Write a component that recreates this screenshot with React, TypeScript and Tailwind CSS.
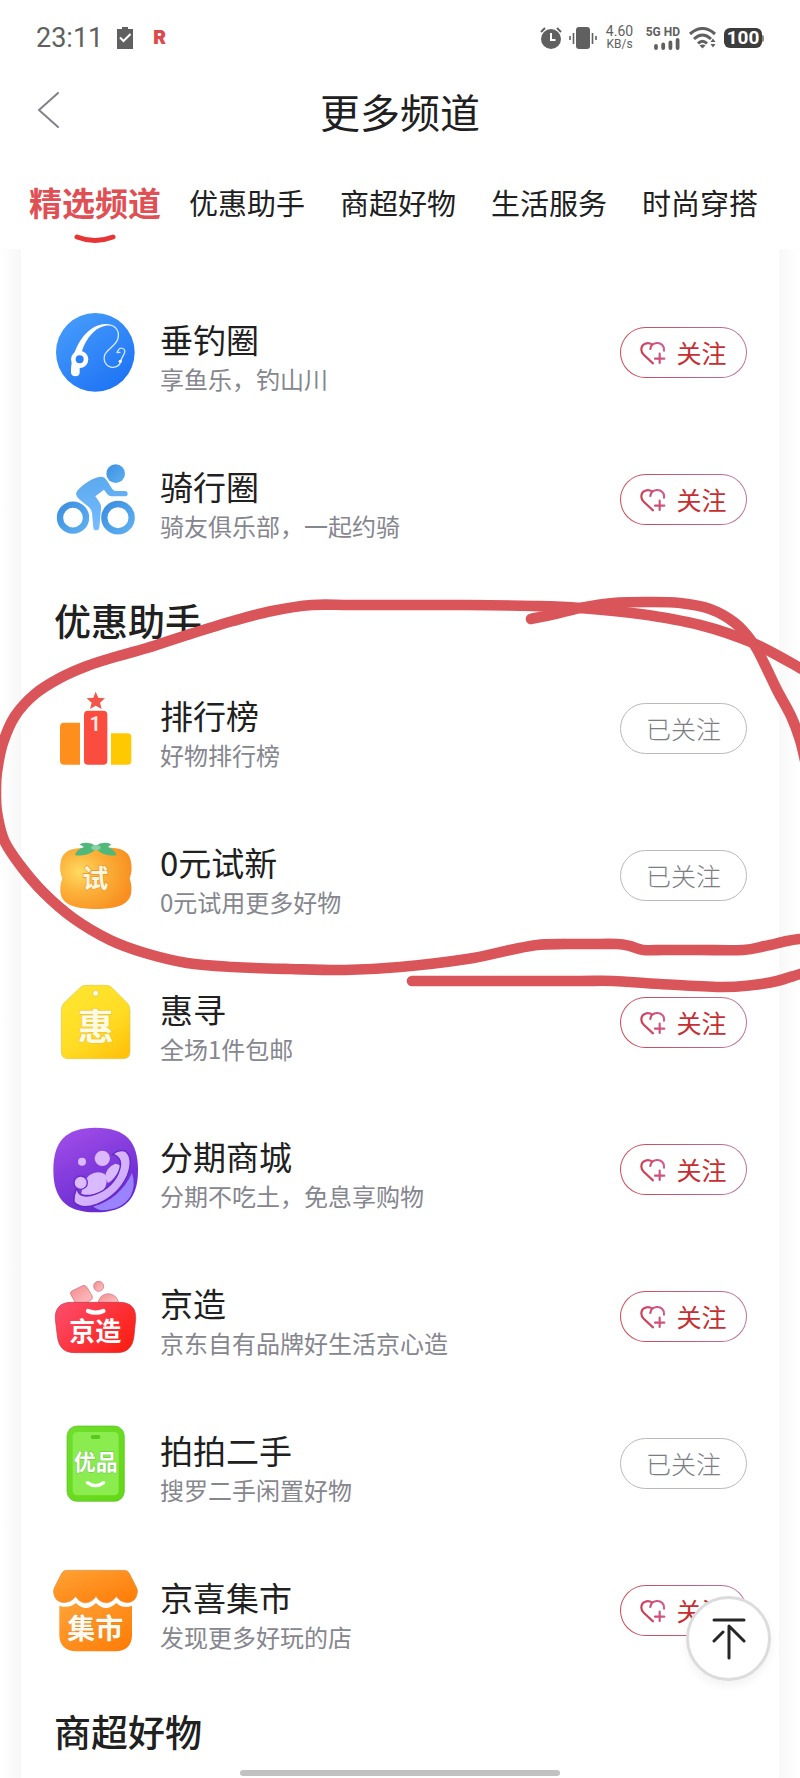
import type { ReactNode } from 'react';

type Point = [number, number];

function smooth(points: Point[]): string {
  let d = `M${points[0][0]} ${points[0][1]}`;
  for (let i = 0; i < points.length - 1; i++) {
    const p0 = points[Math.max(i - 1, 0)];
    const p1 = points[i];
    const p2 = points[i + 1];
    const p3 = points[Math.min(i + 2, points.length - 1)];
    const c1 = [p1[0] + (p2[0] - p0[0]) / 6, p1[1] + (p2[1] - p0[1]) / 6];
    const c2 = [p2[0] - (p3[0] - p1[0]) / 6, p2[1] - (p3[1] - p1[1]) / 6];
    d += `C${c1[0]} ${c1[1]} ${c2[0]} ${c2[1]} ${p2[0]} ${p2[1]}`;
  }
  return d;
}

const penStrokes: Point[][] = [
  [
    [812, 675], [800, 668], [753, 643], [700, 625], [640, 614], [580, 608], [533, 606], [467, 605], [400, 605],
    [350, 605], [312, 605], [272, 611], [233, 621], [187, 635], [147, 648], [115, 657], [87, 666], [60, 678],
    [35, 694], [15, 716], [3, 743], [-3, 772], [-4, 792], [-3, 812], [4, 840], [20, 865], [43, 892], [73, 918],
    [110, 940], [145, 953], [187, 963], [233, 967], [290, 969], [345, 970], [400, 967], [467, 959], [510, 950],
    [537, 945], [563, 944],
  ],
  [[563, 944], [590, 944], [617, 944], [630, 946], [643, 950], [665, 950], [700, 950], [743, 950], [765, 946], [787, 941], [800, 939], [812, 938]],
  [
    [531, 619], [555, 614], [580, 608], [613, 603], [647, 602], [680, 603], [710, 609], [735, 623], [753, 643],
    [764, 663], [777, 690], [791, 716], [800, 740], [806, 765],
  ],
  [[412, 981], [510, 981], [580, 981], [613, 981], [660, 984], [720, 987], [753, 985], [777, 981], [800, 974], [812, 971]],
];

function PenMarks() {
  return (
    <svg
      viewBox="0 590 800 410"
      className="pointer-events-none absolute top-[590px] left-0 z-10 w-full"
      fill="none"
      stroke="#d9555a"
      strokeWidth="10.6"
      strokeLinecap="round"
      strokeLinejoin="round"
      aria-hidden="true"
    >
      {penStrokes.map((points, i) => (
        <path key={i} d={smooth(points)} />
      ))}
    </svg>
  );
}

const glyph = '"Noto Sans CJK SC", sans-serif';

function Icon({ viewBox, children }: { viewBox: string; children: ReactNode }) {
  return (
    <svg viewBox={viewBox} className="size-[86px] shrink-0" aria-hidden="true">
      {children}
    </svg>
  );
}

const FishingIcon = () => (
  <Icon viewBox="159 60 258 258">
    <defs>
      <linearGradient id="fish" x1="0" y1="0" x2="0.7" y2="1">
        <stop offset="0" stopColor="#4aa0fb" />
        <stop offset="1" stopColor="#1f74f5" />
      </linearGradient>
    </defs>
    <circle cx="286" cy="187" r="118" fill="url(#fish)" />
    <path d="M213 248C212 222 220 190 236 160C258 122 288 101 322 102L330 106C300 106 276 125 259 154C253 164 248 176 246 184L232 228L239 234V248C239 262 214 262 213 248Z" fill="#fff" />
    <path d="M322 104C350 106 360 126 353 148C345 170 322 176 314 195C308 216 322 233 340 232C354 231 361 222 362 212" fill="none" stroke="#d5e9ff" strokeWidth="4" strokeLinecap="round" />
    <path d="M362 212L373 190C380 176 360 168 354 182L351 188L360 187" fill="none" stroke="#cfe5ff" strokeWidth="4" strokeLinecap="round" strokeLinejoin="round" />
    <circle cx="361" cy="214" r="5" fill="#fff" />
    <circle cx="239" cy="208" r="19" fill="#2b82f8" stroke="#fff" strokeWidth="14" />
  </Icon>
);

const CyclingIcon = () => (
  <Icon viewBox="159 500 258 258">
    <defs>
      <linearGradient id="rider" x1="0" y1="0" x2="0" y2="1">
        <stop offset="0" stopColor="#5ba9ee" />
        <stop offset="1" stopColor="#77bcff" />
      </linearGradient>
      <linearGradient id="wheel" x1="0" y1="0" x2="1" y2="1">
        <stop offset="0" stopColor="#3b8fe0" />
        <stop offset="1" stopColor="#5eb0f2" />
      </linearGradient>
    </defs>
    <circle cx="347" cy="550" r="28" fill="url(#wheel)" />
    <circle cx="219" cy="682" r="39" fill="none" stroke="url(#wheel)" strokeWidth="19" />
    <circle cx="354" cy="682" r="41" fill="none" stroke="url(#wheel)" strokeWidth="19" />
    <path d="M233 600C252 578 280 562 302 559Q313 558 318 567L337 596Q341 602 348 602H374Q383 602 383 610Q383 618 374 618H334Q327 618 322 612L312 598L286 618L298 635Q304 643 303 655L298 712Q296 720 289 720Q281 720 280 712L276 668Q275 658 267 651L236 625Q222 613 233 600Z" fill="url(#rider)" />
  </Icon>
);

const RankIcon = () => (
  <Icon viewBox="159 316 258 258">
    <path d="M287 333L295 351L315 353L300 366L305 385L287 375L270 385L275 366L260 353L280 351Z" fill="#f4554a" />
    <path d="M192 426H240V552H192Q180 552 180 540V438Q180 426 192 426Z" fill="#ff8f1c" />
    <path d="M333 458H383Q394 458 394 469V541Q394 552 383 552H333Z" fill="#ffc900" />
    <rect x="252" y="390" width="70" height="162" rx="12" fill="#fb4c40" />
    <text x="286" y="451" textAnchor="middle" fontSize="60" fontWeight="600" fontFamily="Roboto, sans-serif" fill="#ffe9e4">1</text>
  </Icon>
);

const TrialIcon = () => (
  <Icon viewBox="159 756 258 258">
    <defs>
      <radialGradient id="fruit" cx="0.28" cy="0.4" r="0.75">
        <stop offset="0" stopColor="#ffdb62" />
        <stop offset="0.45" stopColor="#fcb13a" />
        <stop offset="1" stopColor="#f88f20" />
      </radialGradient>
    </defs>
    <path d="M288 801C352 796 385 804 392 838Q399 868 389 892Q397 915 393 940C384 974 347 984 288 984S191 974 182 940Q178 915 187 892Q176 868 183 838C191 804 224 797 288 801Z" fill="url(#fruit)" />
    <path d="M238 790Q266 779 287 795Q308 779 334 790L324 798Q344 806 350 822Q314 829 288 804Q262 829 224 822Q230 806 252 798Z" fill="#4fb87a" />
    <ellipse cx="288" cy="800" rx="14" ry="7" fill="#84d5a0" />
    <text x="286" y="921" textAnchor="middle" fontSize="78" fontWeight="700" fontFamily={glyph} fill="#fff6dd" stroke="#ea942f" strokeWidth="4" paintOrder="stroke">试</text>
  </Icon>
);

const TagIcon = () => (
  <Icon viewBox="159 117 258 258">
    <defs>
      <linearGradient id="tag" x1="0.1" y1="0" x2="0.8" y2="1">
        <stop offset="0" stopColor="#ffe631" />
        <stop offset="0.6" stopColor="#ffdc24" />
        <stop offset="1" stopColor="#ffc30c" />
      </linearGradient>
    </defs>
    <path d="M257 133H319Q329 133 336 140L382 186Q390 195 390 207V332Q390 353 369 353H205Q184 353 184 332V207Q184 195 192 186L240 140Q247 133 257 133Z" fill="url(#tag)" stroke="#ddc74a" strokeWidth="2" />
    <circle cx="287" cy="157" r="9" fill="#fffbe3" stroke="#dcbb32" strokeWidth="2" />
    <text x="287" y="298" textAnchor="middle" fontSize="108" fontWeight="700" fontFamily={glyph} fill="#fffbe2" stroke="#ecc63b" strokeWidth="4" paintOrder="stroke">惠</text>
  </Icon>
);

const InstallmentIcon = () => (
  <Icon viewBox="159 556 258 258">
    <defs>
      <linearGradient id="planet" x1="0.1" y1="0" x2="0.6" y2="1">
        <stop offset="0" stopColor="#a24ee9" />
        <stop offset="1" stopColor="#6429cf" />
      </linearGradient>
      <linearGradient id="ring" x1="0" y1="0" x2="1" y2="1">
        <stop offset="0" stopColor="#e2c2ff" />
        <stop offset="1" stopColor="#c9a5fb" />
      </linearGradient>
    </defs>
    <path d="M287 558C378 558 414 600 414 685S378 812 287 812S160 770 160 685S196 558 287 558Z" fill="url(#planet)" />
    <path d="M396 694Q408 730 392 763Q366 805 305 806Q288 803 280 794C330 782 374 744 396 694Z" fill="#9b83ff" />
    <circle cx="246" cy="660" r="12" fill="#dcb8fd" />
    <circle cx="307" cy="650" r="23" fill="#dcb8fd" />
    <path d="M244 757Q246 720 268 701Q292 684 315 698Q328 725 308 748Q280 765 244 757Z" fill="#d9b9ff" />
    <path d="M315 707Q318 677 346 666Q367 668 358 684Q342 715 324 724Z" fill="#d9b9ff" />
    <path d="M338 638Q355 624 376 628Q402 650 382 702Q355 761 290 788Q244 805 222 781Q221 757 232 738Q232 768 272 762Q331 746 354 697Q375 648 338 638Z" fill="url(#ring)" stroke="#6428c4" strokeWidth="4" />
    <circle cx="242" cy="723" r="20" fill="#dcbcff" stroke="#6c2cc9" strokeWidth="4" />
  </Icon>
);

const JingzaoIcon = () => (
  <Icon viewBox="159 126 258 258">
    <defs>
      <linearGradient id="bag" x1="0" y1="0.2" x2="1" y2="0.8">
        <stop offset="0" stopColor="#fc4b68" />
        <stop offset="1" stopColor="#fc1d11" />
      </linearGradient>
      <linearGradient id="goods" x1="0" y1="0" x2="1" y2="1">
        <stop offset="0" stopColor="#f28a90" />
        <stop offset="1" stopColor="#ffc4c4" />
      </linearGradient>
    </defs>
    <g fill="url(#goods)" stroke="#c9666e" strokeWidth="2">
      <circle cx="296" cy="163" r="15" />
      <path d="M217 176L248 161Q256 158 261 166L276 191Q280 199 273 204L252 215H228L212 187Q210 179 217 176Z" />
      <path d="M294 215Q298 186 326 185Q352 188 356 215Z" />
    </g>
    <path d="M214 211H359C394 211 409 230 407 262L402 312C398 346 382 362 350 362H224C192 362 176 346 172 312L166 262C164 230 180 211 214 211Z" fill="url(#bag)" stroke="#c33643" strokeWidth="2" />
    <path d="M264 237Q287 247 310 237" fill="none" stroke="#fff" strokeWidth="13" strokeLinecap="round" />
    <text x="286" y="328" textAnchor="middle" fontSize="78" fontWeight="700" fontFamily={glyph} fill="#fff">京造</text>
  </Icon>
);

const PaipaiIcon = () => (
  <Icon viewBox="159 567 258 258">
    <defs>
      <linearGradient id="phone" x1="0" y1="0" x2="1" y2="1">
        <stop offset="0" stopColor="#6fdf2d" />
        <stop offset="1" stopColor="#63d813" />
      </linearGradient>
    </defs>
    <rect x="201" y="582" width="172" height="226" rx="30" fill="url(#phone)" stroke="#56bd28" strokeWidth="2" />
    <rect x="218" y="600" width="138" height="190" rx="14" fill="#8bec50" />
    <rect x="272" y="609" width="29" height="12" rx="6" fill="#57c91f" />
    <text x="287" y="714" textAnchor="middle" fontSize="66" fontWeight="700" fontFamily={glyph} fill="#fff" stroke="#66c542" strokeWidth="3" paintOrder="stroke">优品</text>
    <path d="M262 752Q287 770 311 752" fill="none" stroke="#fff" strokeWidth="10" strokeLinecap="round" />
  </Icon>
);

const MarketIcon = () => (
  <Icon viewBox="159 136 258 258">
    <defs>
      <linearGradient id="stall" x1="0" y1="0" x2="1" y2="1">
        <stop offset="0" stopColor="#ffa336" />
        <stop offset="1" stopColor="#ff7a05" />
      </linearGradient>
    </defs>
    <path d="M199 143H374Q383 143 388 152L410 195Q415 205 410 219C402 245 365 247 349 221C334 247 303 247 288 221C272 247 241 247 227 221C209 247 171 245 163 219Q158 205 163 195L185 152Q190 143 199 143Z" fill="url(#stall)" stroke="#d99443" strokeWidth="2" />
    <path d="M178 249Q204 259 228 241Q257 271 288 241Q317 271 349 241Q370 260 396 249V338C396 370 376 386 347 386H229C199 386 178 370 178 338Z" fill="url(#stall)" />
    <text x="286" y="348" textAnchor="middle" fontSize="84" fontWeight="700" fontFamily={glyph} fill="#fffaf0" stroke="#e08a2c" strokeWidth="3" paintOrder="stroke">集市</text>
  </Icon>
);

interface Channel {
  name: string;
  note: string;
  followed: boolean;
  icon: ReactNode;
}

const featured: Channel[] = [
  { name: '垂钓圈', note: '享鱼乐，钓山川', followed: false, icon: <FishingIcon /> },
  { name: '骑行圈', note: '骑友俱乐部，一起约骑', followed: false, icon: <CyclingIcon /> },
];

const deals: Channel[] = [
  { name: '排行榜', note: '好物排行榜', followed: true, icon: <RankIcon /> },
  { name: '0元试新', note: '0元试用更多好物', followed: true, icon: <TrialIcon /> },
  { name: '惠寻', note: '全场1件包邮', followed: false, icon: <TagIcon /> },
  { name: '分期商城', note: '分期不吃土，免息享购物', followed: false, icon: <InstallmentIcon /> },
  { name: '京造', note: '京东自有品牌好生活京心造', followed: false, icon: <JingzaoIcon /> },
  { name: '拍拍二手', note: '搜罗二手闲置好物', followed: true, icon: <PaipaiIcon /> },
  { name: '京喜集市', note: '发现更多好玩的店', followed: false, icon: <MarketIcon /> },
];

function FollowButton({ followed }: { followed: boolean }) {
  if (followed) {
    return (
      <button type="button" className="flex h-[51px] w-[127px] shrink-0 items-center justify-center rounded-full border border-[#b9b9bd] pb-[2px] text-[25px] leading-9 font-light text-[#7c7d85]">
        已关注
      </button>
    );
  }
  return (
    <button
      type="button"
      className="flex h-[51px] w-[127px] shrink-0 items-center justify-center gap-[10px] rounded-full border border-transparent text-[25px] leading-9 text-[#c62f32] [background:linear-gradient(#fff,#fff)_padding-box,linear-gradient(80deg,#cc4650,#b9749f)_border-box]"
    >
      <svg viewBox="302 153 78 72" className="h-[24px] w-[26px]" fill="none" stroke="url(#heart)" strokeWidth="6.500" strokeLinecap="round" strokeLinejoin="round" aria-hidden="true">
        <defs>
          <linearGradient id="heart" gradientUnits="userSpaceOnUse" x1="302" y1="200" x2="380" y2="170">
            <stop offset="0" stopColor="#cb3a48" />
            <stop offset="1" stopColor="#cf5f97" />
          </linearGradient>
        </defs>
        <path d="M333 177C334 168 340 160 352 159C366 158 376 169 374 182M339 164C326 155 306 160 306 179C306 186 309 190 314 195L341 220M361 191V219M347 206H375" />
      </svg>
      <span className="pb-[2px]">关注</span>
    </button>
  );
}

function ChannelList({ items }: { items: Channel[] }) {
  return (
    <ul>
      {items.map((item) => (
        <li key={item.name} className="flex h-[147px] items-center">
          {item.icon}
          <div className="ml-[21px] min-w-0 flex-1 pt-2 whitespace-nowrap">
            <h3 className="text-[33px] leading-[44px] text-[#202020]">{item.name}</h3>
            <p className="text-2xl leading-9 text-[#85868e]">{item.note}</p>
          </div>
          <FollowButton followed={item.followed} />
        </li>
      ))}
    </ul>
  );
}

function StatusBar() {
  return (
    <div className="flex h-[76px] items-center pr-9 pl-9 text-[#606060]">
      <span className="font-[Roboto] text-[27px] leading-8">23:11</span>
      <svg viewBox="0 0 16 22" className="ml-[14px] h-[22px] w-4" aria-hidden="true">
        <path d="M0 2H5V0H11V2H16V22H0Z" fill="#606060" />
        <path d="M3 10.500L6.500 14L13.500 7" fill="none" stroke="#fff" strokeWidth="2" />
      </svg>
      <span className="ml-5 font-[Inter] text-[19px] leading-6 font-black text-[#dc4a4e]">R</span>
      <div className="ml-auto flex items-center">
        <svg viewBox="0 0 22 22" className="size-[22px]" aria-hidden="true">
          <circle cx="11" cy="12" r="10" fill="#606060" />
          <path d="M1 5L5 1M17 1L21 5" stroke="#606060" strokeWidth="2" />
          <path d="M11 6V13H15.500" fill="none" stroke="#fff" strokeWidth="2" />
        </svg>
        <svg viewBox="0 0 28 22" className="ml-[7px] h-[22px] w-7" aria-hidden="true">
          <rect x="7" y="0" width="14" height="22" rx="3" fill="#606060" />
          <path d="M1 9V13M4.500 6V17M23.500 6V17M27 9V13" stroke="#606060" strokeWidth="1.600" />
        </svg>
        <div className="ml-2 flex w-[29px] flex-col items-center font-[Roboto]">
          <span className="text-sm leading-[13px]">4.60</span>
          <span className="text-xs leading-[13px]">KB/s</span>
        </div>
        <div className="ml-[10px] flex w-9 flex-col items-end">
          <span className="font-[Roboto] text-xs leading-[12px] font-bold whitespace-nowrap">5G HD</span>
          <svg viewBox="0 0 26 12" className="h-3 w-[26px]" aria-hidden="true">
            <path d="M2 8V10M9.200 6.500V10M16.400 4.500V10M23.600 2V10" stroke="#606060" strokeWidth="3.800" strokeLinecap="round" />
          </svg>
        </div>
        <svg viewBox="0 0 28 22" className="ml-[9px] h-[22px] w-7" aria-hidden="true">
          <path d="M1 7Q13.500 -4 26 7M5 12Q13.500 4 22 12M9 16.500Q13.500 12 18 16.500" fill="none" stroke="#606060" strokeWidth="3" />
          <path d="M10.500 18.500Q13.500 16.500 16.500 18.500L13.500 21.500Z" fill="#606060" />
          <path d="M21.500 15L24 11.500L26.500 15ZM21.500 17L24 20.500L26.500 17Z" fill="#606060" />
        </svg>
        <div className="ml-[7px] flex items-center">
          <span className="flex h-5 w-[38px] items-center justify-center rounded-md bg-[#3c3c3c] font-[Roboto] text-[19px] leading-5 font-bold text-white">100</span>
          <span className="h-[7px] w-[2px] rounded-r-sm bg-[#8a8a8a]" />
        </div>
      </div>
    </div>
  );
}

const otherTabs = ['优惠助手', '商超好物', '生活服务', '时尚穿搭'];

export default function App() {
  return (
    <div className="relative flex min-h-screen flex-col overflow-hidden bg-white font-['Noto_Sans_CJK_SC',sans-serif]">
      <StatusBar />
      <header className="relative flex h-[70px] items-center justify-center">
        <button type="button" aria-label="返回" className="absolute left-9 p-0">
          <svg viewBox="0 0 24 38" className="h-[38px] w-6" fill="none" stroke="#808288" strokeWidth="2" strokeLinecap="round" strokeLinejoin="round" aria-hidden="true">
            <path d="M22 1L3 18L22 35" />
          </svg>
        </button>
        <h1 className="text-[40px] leading-[52px] text-[#202020]">更多频道</h1>
      </header>
      <nav className="flex h-[103px] items-start overflow-hidden pt-8 pl-[29px] whitespace-nowrap">
        <a href="#featured" aria-current="page" className="flex flex-col items-center text-[33px] leading-[48px] font-bold text-[#df4f54]">
          精选频道
          <svg viewBox="0 0 42 12" className="mt-[7px] h-3 w-[42px]" aria-hidden="true">
            <path d="M3 4Q21 11 39 4" fill="none" stroke="#e73536" strokeWidth="5" strokeLinecap="round" />
          </svg>
        </a>
        <div className="ml-7 flex gap-[35px]">
          {otherTabs.map((tab) => (
            <a key={tab} href={`#${tab}`} className="text-[29px] leading-[48px] text-[#202020]">
              {tab}
            </a>
          ))}
        </div>
      </nav>
      <div className="flex flex-1">
        <div className="w-[21px] bg-linear-to-r from-white to-[#f7f7f7]" />
        <main className="min-w-0 flex-1 pt-[30px] pr-8 pl-8">
          <section id="featured">
            <ChannelList items={featured} />
          </section>
          <section id="优惠助手">
            <h2 className="h-[82px] pt-[22px] pl-px text-[37px] leading-[50px] font-medium text-[#202020]">优惠助手</h2>
            <ChannelList items={deals} />
          </section>
          <section id="商超好物">
            <h2 className="h-[82px] pt-[22px] pl-px text-[37px] leading-[50px] font-medium text-[#202020]">商超好物</h2>
          </section>
        </main>
        <div className="w-[21px] bg-linear-to-l from-white to-[#f8f8f8]" />
      </div>
      <PenMarks />
      <button type="button" aria-label="回到顶部" className="fixed right-[29px] bottom-[97px] z-20 flex size-[85px] items-center justify-center rounded-full border-3 border-[#dcdcdc] bg-white shadow-[0_5px_10px_rgba(0,0,0,0.05)]">
        <svg viewBox="0 0 34 42" className="h-[42px] w-[34px]" fill="none" stroke="#262626" strokeWidth="3" strokeLinecap="round" strokeLinejoin="round" aria-hidden="true">
          <path d="M2 2H32M17 40V8L32 23M2 23L11 14" />
        </svg>
      </button>
      <div className="fixed bottom-[2px] left-[30%] z-20 h-[6px] w-2/5 rounded-full bg-[#c1c1c1]" />
    </div>
  );
}
